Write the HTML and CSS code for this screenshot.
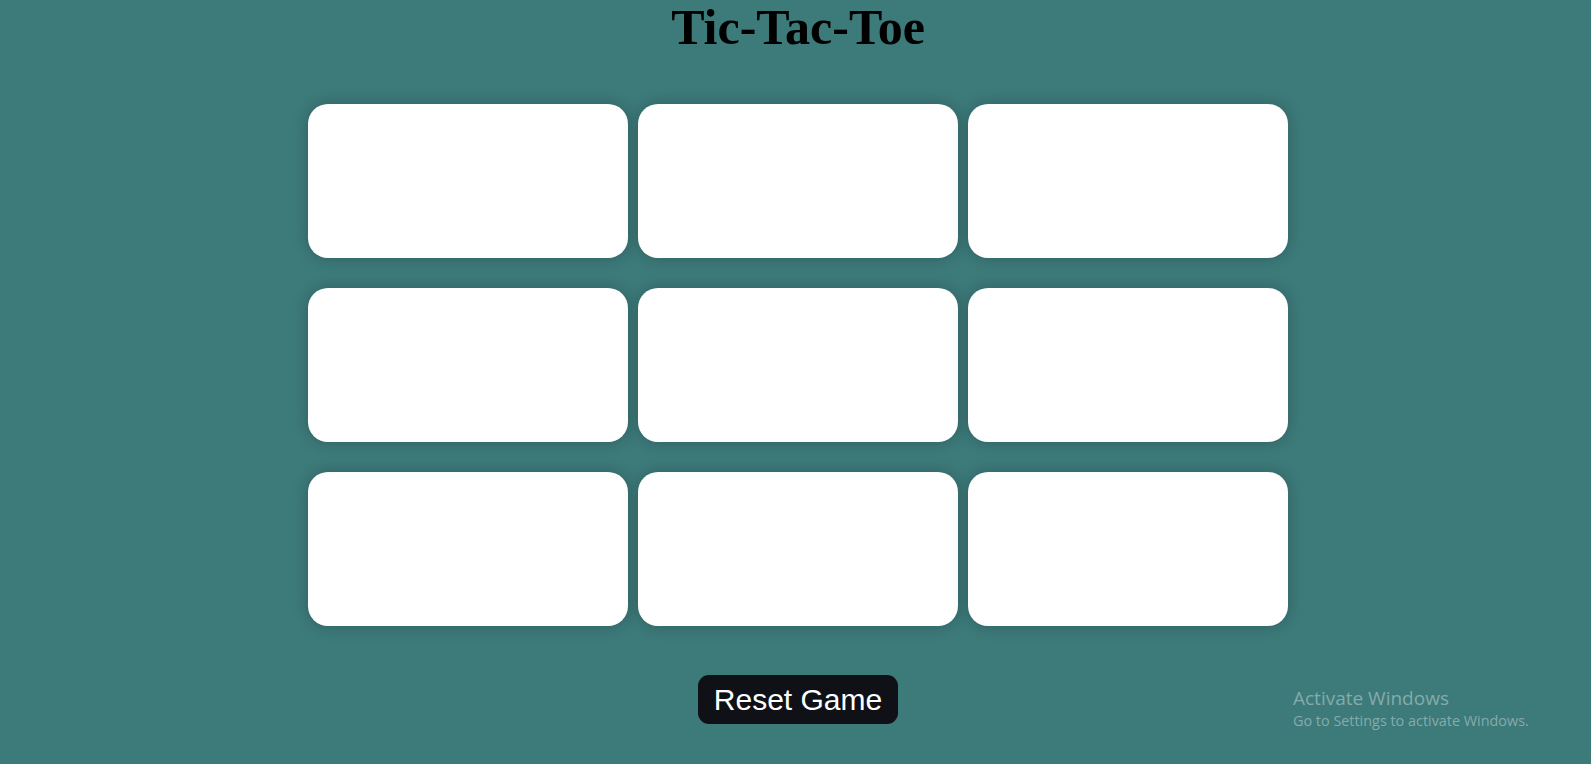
FILE: index.html
```html
<!DOCTYPE html>
<html lang="en">
<head>
<meta charset="utf-8">
<title>Tic-Tac-Toe</title>
<link rel="stylesheet" href="styles.css">
</head>
<body>
<main class="game">
  <h1 class="title">Tic-Tac-Toe</h1>
  <div class="board">
    <button class="cell"></button>
    <button class="cell"></button>
    <button class="cell"></button>
    <button class="cell"></button>
    <button class="cell"></button>
    <button class="cell"></button>
    <button class="cell"></button>
    <button class="cell"></button>
    <button class="cell"></button>
  </div>
  <button class="reset">Reset Game</button>
</main>
<div class="activate">
  <div class="activate-title">Activate Windows</div>
  <div class="activate-sub">Go to Settings to activate Windows.</div>
</div>
</body>
</html>
```
FILE: styles.css
```css
html, body {
  margin: 0;
  padding: 0;
}
body {
  background: #3d7a7a;
  width: 1591px;
  height: 764px;
  overflow: hidden;
  position: relative;
}
.game {
  display: flex;
  flex-direction: column;
  align-items: center;
  padding-left: 5px;
}
.title {
  margin: 0;
  font-family: "Liberation Serif", "Times New Roman", serif;
  font-weight: bold;
  font-size: 50px;
  line-height: 55px;
  color: #000;
}
.board {
  margin-top: 49px;
  display: grid;
  grid-template-columns: repeat(3, 320px);
  grid-auto-rows: 154px;
  column-gap: 10px;
  row-gap: 30px;
}
.cell {
  border: none;
  background: #fff;
  border-radius: 20px;
  box-shadow: 0 0 16px rgba(0, 0, 0, 0.22);
  padding: 0;
}
.reset {
  margin-top: 49px;
  background: #0f1116;
  color: #fff;
  border: none;
  border-radius: 11px;
  font-family: "Liberation Sans", Arial, sans-serif;
  font-size: 30px;
  line-height: 35px;
  padding: 7px 16px;
}
.activate {
  position: absolute;
  left: 1293px;
  top: 687px;
  font-family: "Open Sans", "Noto Sans", sans-serif;
  color: rgba(255, 255, 255, 0.38);
}
.activate-title {
  font-size: 19px;
  line-height: 22px;
}
.activate-sub {
  font-size: 14.4px;
  line-height: 24px;
}
```
